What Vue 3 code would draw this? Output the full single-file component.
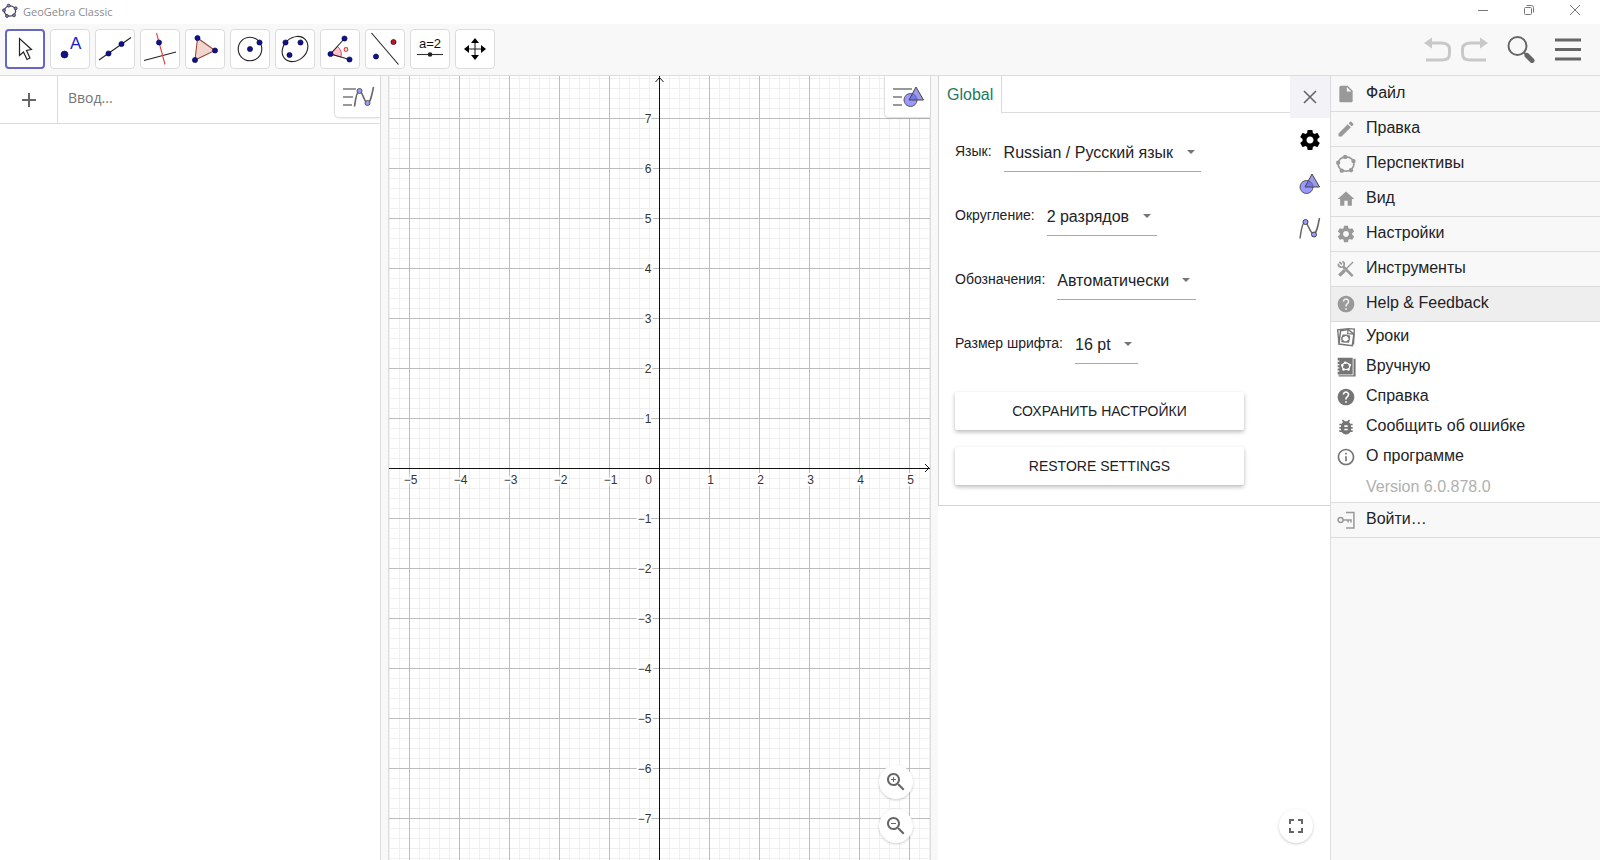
<template>
  <div class="app">
    <div class="titlebar">
      <svg class="logo" viewBox="0 0 24 24" v-html="icons.logo"></svg>
      <span class="app-name">GeoGebra Classic</span>
      <div class="window-buttons">
        <button aria-label="Minimize">
          <svg width="12" height="12" viewBox="0 0 12 12"><path d="M1 6.5H11" stroke="#777" fill="none"/></svg>
        </button>
        <button aria-label="Restore">
          <svg width="12" height="12" viewBox="0 0 12 12"><path d="M1.5 4.5Q1.5 3.5 2.5 3.5H7.5Q8.5 3.5 8.5 4.5V9.5Q8.5 10.5 7.5 10.5H2.5Q1.5 10.5 1.5 9.5ZM3.5 1.5H8.5Q10.5 1.5 10.5 3.5V8.5" stroke="#777" fill="none"/></svg>
        </button>
        <button aria-label="Close">
          <svg width="12" height="12" viewBox="0 0 12 12"><path d="M1 1L11 11M11 1L1 11" stroke="#777" fill="none"/></svg>
        </button>
      </div>
    </div>

    <header class="toolbar">
      <div class="tools">
        <button
          v-for="tool in tools"
          :key="tool.name"
          class="tool"
          :class="{ active: tool.name === activeTool }"
          :aria-label="tool.name"
          @click="activeTool = tool.name"
        >
          <svg viewBox="2 2 36 36" v-html="tool.icon"></svg>
        </button>
      </div>
      <div class="actions">
        <div class="history">
          <button aria-label="Undo">
            <svg width="28" height="26" viewBox="0 0 28 26">
              <path d="M7 7H17Q25.5 7 25.5 13V18Q25.5 24 18 24H2" fill="none" stroke="#c8c8c8" stroke-width="3"/>
              <path d="M0 7L8 1.500V12.500Z" fill="#c8c8c8"/>
            </svg>
          </button>
          <button aria-label="Redo">
            <svg width="28" height="26" viewBox="0 0 28 26">
              <path d="M21 7H11Q2.5 7 2.5 13V18Q2.5 24 10 24H26" fill="none" stroke="#c8c8c8" stroke-width="3"/>
              <path d="M28 7L20 1.500V12.500Z" fill="#c8c8c8"/>
            </svg>
          </button>
        </div>
        <button aria-label="Search">
          <svg width="28" height="28" viewBox="0 0 28 28">
            <circle cx="10.5" cy="11" r="9" fill="none" stroke="#666" stroke-width="2"/>
            <path d="M17 17.5L20 20.5" stroke="#666" stroke-width="2"/>
            <path d="M20 20.5L25 25.5" stroke="#666" stroke-width="5" stroke-linecap="round"/>
          </svg>
        </button>
        <button aria-label="Menu">
          <svg width="28" height="28" viewBox="0 0 28 28">
            <path d="M1 5H27M1 14.500H27M1 24H27" stroke="#666" stroke-width="3"/>
          </svg>
        </button>
      </div>
    </header>

    <main class="main">
      <div class="workspace">
        <section class="algebra">
          <div class="algebra-row">
            <button class="add" aria-label="Add">
              <svg width="16" height="16" viewBox="0 0 16 16"><path d="M8 1V15M1 8H15" stroke="#666" stroke-width="2"/></svg>
            </button>
            <input v-model="expression" class="expression" type="text" placeholder="Ввод..." aria-label="Ввод">
            <button class="stylebar" aria-label="Algebra style bar">
              <svg width="32" height="24" viewBox="0 0 32 24">
                <path d="M0 4H13M0 12H10M0 20H9" stroke="#999" stroke-width="2"/>
                <path d="M11.5 21.5C12.5 14 14 5.500 16.5 5.500S21.5 18 24.5 18S29 9 30.5 2" fill="none" stroke="#666" stroke-width="1.600"/>
                <circle cx="16.500" cy="6" r="2.500" fill="#9999ff" stroke="#555"/>
                <circle cx="24.500" cy="18" r="2.500" fill="#9999ff" stroke="#555"/>
              </svg>
            </button>
          </div>
        </section>

        <section class="graphics">
          <svg class="canvas">
            <!-- everything is measured from the origin in the centre -->
            <svg x="50%" y="50%" overflow="visible" shape-rendering="crispEdges">
              <g stroke="#f0f0f0">
                <path v-for="n in minor" :key="n" :d="`M${n * 10} -3000V3000M-3000 ${n * 10}H3000`"/>
              </g>
              <g stroke="#bdbdbd">
                <path v-for="n in major" :key="n" :d="`M${n * unit} -3000V3000M-3000 ${n * unit}H3000`"/>
              </g>
              <path d="M0 -3000V3000M-3000 0H3000" stroke="#111"/>
            </svg>
            <svg x="50%" y="50%" overflow="visible">
              <g class="labels">
                <text x="-11" y="16" text-anchor="middle">0</text>
                <text v-for="n in xLabels" :key="'x' + n" :x="n * unit + 1" y="16" text-anchor="middle">{{ format(n) }}</text>
                <text v-for="n in yLabels" :key="'y' + n" x="-8" :y="-n * unit + 5" text-anchor="end">{{ format(n) }}</text>
              </g>
            </svg>
            <svg x="50%" y="0" overflow="visible"><path d="M-4 6L0 1.500L4 6" fill="none" stroke="#111"/></svg>
            <svg x="100%" y="50%" overflow="visible"><path d="M-5 -4L-1 0L-5 4" fill="none" stroke="#111"/></svg>
          </svg>
          <button class="stylebar over" aria-label="Graphics style bar">
            <svg width="32" height="24" viewBox="0 0 32 24">
              <path d="M0 4H19M0 12H9M0 20H9" stroke="#999" stroke-width="2"/>
              <g transform="translate(10 1)" v-html="icons.shapes"></g>
            </svg>
          </button>
          <div class="zoom-buttons">
            <button class="round" aria-label="Zoom in"><svg viewBox="0 0 24 24" v-html="icons.zoomIn"></svg></button>
            <button class="round" aria-label="Zoom out"><svg viewBox="0 0 24 24" v-html="icons.zoomOut"></svg></button>
          </div>
        </section>

        <section class="settings">
          <div class="settings-body">
            <div class="settings-main">
              <div class="tabs">
                <button class="tab">Global</button>
                <span class="tab-rest"></span>
              </div>
              <form class="form" @submit.prevent>
                <div v-for="field in fields" :key="field.id" class="field">
                  <label :for="field.id">{{ field.label }}</label>
                  <span class="select">
                    <select :id="field.id"><option>{{ field.value }}</option></select>
                  </span>
                </div>
                <div class="form-buttons">
                  <button type="button">СОХРАНИТЬ НАСТРОЙКИ</button>
                  <button type="button">RESTORE SETTINGS</button>
                </div>
              </form>
            </div>
            <div class="side">
              <button class="close" aria-label="Close settings">
                <svg width="16" height="16" viewBox="0 0 16 16"><path d="M2 2L14 14M14 2L2 14" stroke="#666" stroke-width="1.600"/></svg>
              </button>
              <button aria-label="Global settings"><svg width="24" height="24" viewBox="0 0 24 24" v-html="icons.gear"></svg></button>
              <button aria-label="Graphics settings"><svg width="22" height="22" viewBox="0 0 22 22" v-html="icons.shapes"></svg></button>
              <button aria-label="Algebra settings">
                <svg width="22" height="22" viewBox="0 0 22 22">
                  <path d="M1 21.500C2 14 3.500 5 6 5S11.500 17 14.500 17S19 9 20.500 1" fill="none" stroke="#666" stroke-width="1.500"/>
                  <circle cx="6.500" cy="5" r="2.500" fill="#9999ff" stroke="#444"/>
                  <circle cx="15" cy="17.500" r="2.500" fill="#9999ff" stroke="#444"/>
                </svg>
              </button>
            </div>
          </div>
          <button class="round fullscreen" aria-label="Fullscreen"><svg viewBox="0 0 24 24" v-html="icons.fullscreen"></svg></button>
        </section>
      </div>

      <nav class="menu">
        <button v-for="item in menuItems" :key="item.label" class="menu-item" :class="{ open: item.open }">
          <svg viewBox="0 0 24 24" v-html="icons[item.icon]"></svg>
          <span>{{ item.label }}</span>
        </button>
        <div class="submenu">
          <button v-for="item in helpItems" :key="item.label" class="sub-item">
            <svg viewBox="0 0 24 24" v-html="icons[item.icon]"></svg>
            <span>{{ item.label }}</span>
          </button>
          <div class="version">Version 6.0.878.0</div>
        </div>
        <button class="menu-item">
          <svg viewBox="0 0 24 24" v-html="icons.signIn"></svg>
          <span>Войти…</span>
        </button>
      </nav>
    </main>
  </div>
</template>

<script setup>
import { ref } from "vue"

const activeTool = ref("Move")
const expression = ref("")

const dot = (x, y, r = 2.6, fill = "#11118c") => `<circle cx="${x}" cy="${y}" r="${r}" fill="${fill}" stroke="#000040" stroke-width=".6"/>`
const stroke = (d, color = "#222") => `<path d="${d}" fill="none" stroke="${color}" stroke-width="1.1"/>`

const tools = [
  { name: "Move", icon: `<path d="M14.5 9.5V26.5L18.5 23L22 30.5L25 29L21.5 21.5L26.5 20.5Z" fill="#fff" stroke="#222" stroke-width="1.2"/>` },
  { name: "Point", icon: dot(14.5, 25.5, 3.5) + `<text x="20" y="20" font-family="Liberation Sans, sans-serif" font-size="17" fill="#1a1acc">A</text>` },
  { name: "Line", icon: stroke("M4 31L36 8.5") + dot(13.5, 24.5) + dot(26.5, 15) },
  { name: "Perpendicular", icon: stroke("M4 31.5L36 23") + stroke("M16.5 4L25 35.5", "#e04040") + dot(19, 13.5) },
  { name: "Polygon", icon: `<path d="M12.5 9L30 21.5L10 31Z" fill="#f0d6cc" stroke="#a0483a" stroke-width="1.1"/>` + dot(12.5, 9) + dot(30, 21.5) + dot(10, 31) },
  { name: "Circle", icon: `<circle cx="20" cy="20" r="11.8" fill="none" stroke="#222" stroke-width="1.1"/>` + dot(20, 20) + dot(29.5, 13.5) },
  { name: "Ellipse", icon: `<ellipse cx="20" cy="20" rx="14" ry="11.3" transform="rotate(-42 20 20)" fill="none" stroke="#222" stroke-width="1.1"/>` + dot(10.5, 13.5) + dot(25.5, 13.5) + dot(14.5, 26) },
  { name: "Angle", icon: `<path d="M10.5 25L17.500 17.5Q22.5 21.5 21 28Z" fill="#ffc4cc" stroke="#e05060"/>` + stroke("M24.5 9.5L10.5 25L29.5 30.5") + `<circle cx="26" cy="20.5" r="1.8" fill="none" stroke="#e04040" stroke-width="1.2"/>` + dot(24.5, 9.5) + dot(10.5, 25) + dot(29.5, 30.5) },
  { name: "Reflect", icon: stroke("M6.5 4L33.5 35.5") + dot(11, 27.5) + dot(28.5, 13, 2.6, "#c01818") },
  { name: "Slider", icon: `<text x="20" y="19" text-anchor="middle" font-family="Liberation Sans, sans-serif" font-size="13" fill="#111">a=2</text>` + stroke("M7 25.5H33", "#333") + `<circle cx="20" cy="25.5" r="2.3" fill="#222"/>` },
  { name: "Move view", icon: stroke("M20 12V28M12 20H28") + `<path d="M20 9L24 14H16ZM20 31L24 26H16ZM9 20L14 16V24ZM31 20L26 16V24Z" fill="#000"/>` }
]

// ellipse with five points on it
const pentagon = `<g fill="currentColor"><ellipse cx="12" cy="12" rx="9.500" ry="8.500" fill="none" stroke="currentColor" stroke-width="2"/>
  <circle cx="11" cy="3.500" r="2.600"/><circle cx="21" cy="8.500" r="2.600"/><circle cx="18" cy="19.500" r="2.600"/><circle cx="7" cy="20" r="2.600"/><circle cx="2.600" cy="10.500" r="2.600"/></g>`

const lens = "M15.5 14h-.79l-.28-.27C15.41 12.59 16 11.11 16 9.5 16 5.91 13.09 3 9.5 3S3 5.91 3 9.5 5.91 16 9.5 16c1.61 0 3.09-.59 4.23-1.57l.27.28v.79l5 4.99L20.49 19l-4.99-5zm-6 0C7.01 14 5 11.99 5 9.5S7.01 5 9.5 5 14 7.01 14 9.5 11.99 14 9.5 14z"

const icons = {
  logo: `<ellipse cx="12" cy="12" rx="8.500" ry="7.800" fill="none" stroke="#444" stroke-width="1.800"/>
    <g fill="#8080e0" stroke="#333" stroke-width="1.200"><circle cx="10" cy="4" r="2.200"/><circle cx="20.500" cy="8" r="2.200"/><circle cx="18" cy="18.500" r="2.200"/><circle cx="7.500" cy="19.500" r="2.200"/><circle cx="3" cy="11" r="2.200"/></g>`,
  shapes: `<circle cx="7.500" cy="14" r="6.500" fill="#9999ff" stroke="#555"/>
    <path d="M13 1L20.500 14H6Z" fill="#6666dd" fill-opacity=".65" stroke="#444"/>`,
  file: `<path fill="currentColor" d="M6 2c-1.1 0-1.99.9-1.99 2L4 20c0 1.1.89 2 1.99 2H18c1.1 0 2-.9 2-2V8l-6-6H6zm7 7V3.500L18.500 9H13z"/>`,
  edit: `<path fill="currentColor" d="M3 17.25V21h3.75L17.81 9.94l-3.75-3.75L3 17.25zM20.71 7.04c.39-.39.39-1.02 0-1.41l-2.34-2.34c-.39-.39-1.02-.39-1.41 0l-1.83 1.83 3.75 3.75 1.83-1.83z"/>`,
  perspectives: pentagon,
  home: `<path fill="currentColor" d="M10 20v-6h4v6h5v-8h3L12 3 2 12h3v8z"/>`,
  gear: `<path fill="currentColor" d="M19.43 12.98c.04-.32.07-.64.07-.98s-.03-.66-.07-.98l2.11-1.65c.19-.15.24-.42.12-.64l-2-3.46c-.12-.22-.39-.3-.61-.22l-2.49 1c-.52-.4-1.08-.73-1.69-.98l-.38-2.65C14.46 2.18 14.25 2 14 2h-4c-.25 0-.46.18-.49.42l-.38 2.65c-.61.25-1.17.59-1.69.98l-2.49-1c-.23-.09-.49 0-.61.22l-2 3.46c-.13.22-.07.49.12.64l2.11 1.65c-.04.32-.07.65-.07.98s.03.66.07.98l-2.11 1.65c-.19.15-.24.42-.12.64l2 3.46c.12.22.39.3.61.22l2.49-1c.52.4 1.08.73 1.69.98l.38 2.65c.03.24.24.42.49.42h4c.25 0 .46-.18.49-.42l.38-2.65c.61-.25 1.17-.59 1.69-.98l2.49 1c.23.09.49 0 .61-.22l2-3.46c.12-.22.07-.49-.12-.64l-2.11-1.65zM12 15.5c-1.93 0-3.5-1.57-3.5-3.5s1.57-3.5 3.5-3.5 3.5 1.57 3.5 3.5-1.57 3.5-3.5 3.5z"/>`,
  tools: `<g fill="none" stroke="currentColor"><path d="M8.500 9L20 20.500" stroke-width="3"/><path d="M4 3.500L7 6.500M3 5.500A3.500 3.500 0 1 0 7.500 3" stroke-width="2"/><path d="M20.500 3.500L11 13" stroke-width="1.600"/><path d="M10.500 13.500L4 20" stroke-width="4"/></g>`,
  help: `<path fill="currentColor" d="M12 2C6.48 2 2 6.48 2 12s4.48 10 10 10 10-4.48 10-10S17.52 2 12 2zm1 17h-2v-2h2v2zm2.07-7.75l-.9.92C13.45 12.9 13 13.5 13 15h-2v-.5c0-1.1.45-2.1 1.17-2.83l1.24-1.26c.37-.36.59-.86.59-1.41 0-1.1-.9-2-2-2s-2 .9-2 2H8c0-2.21 1.79-4 4-4s4 1.79 4 4c0 .88-.36 1.68-.93 2.25z"/>`,
  lessons: `<g fill="none" stroke="currentColor"><path d="M15 2L2 3.500L3.500 19M15 2L22 2.500L21 21" stroke-width="1.600"/><path d="M5.500 4.500L14.500 3L21.500 8.500L19.500 22.500L3.500 20.500Z" stroke-width="1.800"/><path d="M14.500 3L14 8L21.500 8.500" stroke-width="1.500"/><ellipse cx="11.500" cy="14" rx="4.500" ry="4" stroke-width="1.800"/></g><g fill="currentColor"><circle cx="9" cy="10.500" r="1.500"/><circle cx="15.500" cy="11.500" r="1.500"/><circle cx="14.500" cy="17.500" r="1.500"/><circle cx="8" cy="17" r="1.500"/></g>`,
  manual: `<path fill="currentColor" d="M2 1H20V21H2ZM21 2H23.500V23.500H3V22H21Z"/><path d="M.5 5H4M.5 9H4M.5 13H4M.5 17H4" stroke="#fff" stroke-width="1.500"/><g fill="#fff"><ellipse cx="12" cy="11" rx="4.500" ry="4" fill="none" stroke="#fff" stroke-width="1.500"/><circle cx="11" cy="7" r="1.500"/><circle cx="16.500" cy="9.500" r="1.500"/><circle cx="15" cy="15" r="1.500"/><circle cx="9" cy="15" r="1.500"/><circle cx="7.500" cy="10" r="1.500"/></g>`,
  bug: `<path fill="currentColor" d="M20 8h-2.81c-.45-.78-1.07-1.45-1.82-1.96L17 4.41 15.59 3l-2.17 2.17C12.96 5.06 12.49 5 12 5c-.49 0-.96.06-1.41.17L8.41 3 7 4.41l1.62 1.63C7.88 6.55 7.26 7.22 6.81 8H4v2h2.09c-.05.33-.09.66-.09 1v1H4v2h2v1c0 .34.04.67.09 1H4v2h2.81c1.04 1.79 2.97 3 5.19 3s4.15-1.21 5.19-3H20v-2h-2.09c.05-.33.09-.66.09-1v-1h2v-2h-2v-1c0-.34-.04-.67-.09-1H20V8zm-6 8h-4v-2h4v2zm0-4h-4v-2h4v2z"/>`,
  info: `<path fill="currentColor" d="M11 7h2v2h-2zm0 4h2v6h-2zm1-9C6.48 2 2 6.48 2 12s4.48 10 10 10 10-4.48 10-10S17.52 2 12 2zm0 18c-4.41 0-8-3.59-8-8s3.59-8 8-8 8 3.59 8 8-3.59 8-8 8z"/>`,
  signIn: `<g fill="none" stroke="currentColor" stroke-width="1.800"><path d="M12 3H21.500V21.500H12"/><circle cx="5.500" cy="12" r="3"/><path d="M8.500 12H18V15M14.500 12V15"/></g>`,
  zoomIn: `<path fill="#666" d="${lens}M12 10h-2v2H9v-2H7V9h2V7h1v2h2v1z"/>`,
  zoomOut: `<path fill="#666" d="${lens}M7 9h5v1H7z"/>`,
  fullscreen: `<path fill="#666" d="M7 14H5v5h5v-2H7v-3zm-2-4h2V7h3V5H5v5zm12 7h-3v2h5v-5h-2v3zM14 5v2h3v3h2V5h-5z"/>`
}

const range = (max) => Array.from({ length: max * 2 + 1 }, (_, i) => i - max)
const unit = 50
const minor = range(200)
const major = range(40)
const xLabels = range(5).filter(n => n !== 0)
const yLabels = range(7).filter(n => n !== 0)
const format = (n) => n < 0 ? "−" + -n : String(n)

const fields = [
  { id: "language", label: "Язык:", value: "Russian / Русский язык" },
  { id: "rounding", label: "Округление:", value: "2 разрядов" },
  { id: "labeling", label: "Обозначения:", value: "Автоматически" },
  { id: "font-size", label: "Размер шрифта:", value: "16 pt" }
]

const menuItems = [
  { label: "Файл", icon: "file" },
  { label: "Правка", icon: "edit" },
  { label: "Перспективы", icon: "perspectives" },
  { label: "Вид", icon: "home" },
  { label: "Настройки", icon: "gear" },
  { label: "Инструменты", icon: "tools" },
  { label: "Help & Feedback", icon: "help", open: true }
]

const helpItems = [
  { label: "Уроки", icon: "lessons" },
  { label: "Вручную", icon: "manual" },
  { label: "Справка", icon: "help" },
  { label: "Сообщить об ошибке", icon: "bug" },
  { label: "О программе", icon: "info" }
]
</script>

<style>
body{
  margin: 0;
}
</style>

<style scoped>
.app{
  display: flex;
  flex-direction: column;
  height: 100vh;
  background: #fff;
  color: #222226;
  font-family: "Liberation Sans", Arial, sans-serif;
  font-size: 16px;
  overflow: hidden;
}
button{
  display: flex;
  align-items: center;
  justify-content: center;
  padding: 0;
  border: 0;
  background: none;
  color: inherit;
  font: inherit;
  cursor: pointer;
}
svg{
  display: block;
  flex-shrink: 0;
}

/* title bar */
.titlebar{
  display: flex;
  align-items: center;
  box-sizing: border-box;
  height: 24px;
  padding: 0 19px 2px 2px;
}
.logo{
  width: 16px;
  height: 16px;
}
.app-name{
  margin-left: 5px;
  color: #8c8c8c;
  font-family: "Open Sans", sans-serif;
  font-size: 11px;
}
.window-buttons{
  display: flex;
  gap: 34px;
  margin-left: auto;
  padding-bottom: 2px;
}

/* toolbar */
.toolbar{
  display: flex;
  align-items: center;
  justify-content: space-between;
  box-sizing: border-box;
  height: 52px;
  padding: 0 18px 2px 5px;
  background: #f8f8f8;
  border-bottom: 1px solid #dcdcdc;
}
.tools{
  display: flex;
  gap: 5px;
}
.tool{
  box-sizing: border-box;
  width: 40px;
  height: 40px;
  border: 1px solid #dcdcdc;
  border-radius: 4px;
  background: #fff;
}
.tool svg{
  width: 36px;
  height: 36px;
}
.tool.active{
  border: 2px solid #6666c4;
}
.actions{
  display: flex;
  align-items: center;
  gap: 19px;
}
.history{
  display: flex;
  gap: 8px;
}

/* views */
.main{
  display: flex;
  flex: 1;
  min-height: 0;
}
.workspace{
  display: grid;
  flex: 1;
  grid-template-columns: 381fr 543fr 392fr;
  gap: 7px;
  min-width: 0;
  background: #f8f8f8;
}
.algebra{
  min-width: 0;
  background: #fff;
  border-right: 1px solid #dcdcdc;
}
.algebra-row{
  display: flex;
  align-items: stretch;
  height: 47px;
  border-bottom: 1px solid #dcdcdc;
}
.add{
  box-sizing: border-box;
  width: 58px;
  border-right: 1px solid #dcdcdc;
}
.expression{
  flex: 1;
  min-width: 0;
  padding: 0 10px 4px;
  border: 0;
  outline: 0;
  background: none;
  color: #333;
  font-family: "Open Sans", sans-serif;
  font-size: 14px;
}
.expression::placeholder{
  color: #757575;
}
.stylebar{
  box-sizing: border-box;
  align-self: flex-start;
  width: 46px;
  height: 42px;
  padding-left: 2px;
  background: #fff;
  border: 1px solid #e0e0e0;
  border-width: 0 0 1px 1px;
  border-radius: 0 0 0 5px;
  box-shadow: 0 1px 2px rgba(0, 0, 0, .08);
}
.stylebar.over{
  position: absolute;
  top: 0;
  right: 0;
}
.graphics{
  position: relative;
  min-width: 0;
  background: #fff;
  border-left: 1px solid #dcdcdc;
  border-right: 1px solid #dcdcdc;
}
.canvas{
  width: 100%;
  height: 100%;
}
.labels{
  fill: #333;
  stroke: #fff;
  stroke-width: 4px;
  paint-order: stroke;
  font-size: 12px;
}
.zoom-buttons{
  position: absolute;
  right: 17px;
  bottom: 17px;
  display: flex;
  flex-direction: column;
  gap: 10px;
}
.round{
  width: 34px;
  height: 34px;
  border-radius: 50%;
  background: #fff;
  box-shadow: 0 1px 3px rgba(0, 0, 0, .2);
}
.round svg{
  width: 24px;
  height: 24px;
}

/* settings */
.settings{
  position: relative;
  min-width: 0;
  background: #fff;
}
.settings-body{
  display: flex;
  border-left: 1px solid #d4d4d4;
  border-bottom: 1px solid #d4d4d4;
}
.settings-main{
  flex: 1;
  min-width: 0;
}
.tabs{
  display: flex;
  height: 37px;
}
.tab{
  padding: 0 8px;
  border-right: 1px solid #d4dcd8;
  color: #217a5f;
}
.tab-rest{
  flex: 1;
  border-bottom: 1px solid #dcdcdc;
}
.form{
  padding: 19px 16px 20px;
}
.field{
  display: flex;
  align-items: center;
  gap: 12px;
  margin-bottom: 24px;
}
.field label{
  padding-bottom: 2px;
  font-size: 14px;
}
.select{
  position: relative;
}
.select::after{
  content: "";
  position: absolute;
  top: 18px;
  right: 6px;
  border: 4px solid transparent;
  border-top-color: #757575;
  border-bottom: 0;
  pointer-events: none;
}
.select select{
  display: block;
  appearance: none;
  height: 40px;
  padding: 2px 27px 0 0;
  border: 0;
  border-bottom: 1px solid #a8a8a8;
  border-radius: 0;
  outline: 0;
  background: none;
  color: inherit;
  font: inherit;
}
.form-buttons{
  display: flex;
  flex-direction: column;
  gap: 17px;
  width: 289px;
  max-width: 100%;
  padding-top: 4px;
}
.form-buttons button{
  height: 38px;
  border-radius: 2px;
  font-size: 14px;
  box-shadow: 0 2px 4px rgba(0, 0, 0, .28);
}
.side{
  display: flex;
  flex-direction: column;
  width: 40px;
}
.side button{
  height: 44px;
  color: #000;
}
.side .close{
  height: 42px;
  background: #f3f3f7;
}
.fullscreen{
  position: absolute;
  right: 17px;
  bottom: 17px;
}

/* menu */
.menu{
  box-sizing: border-box;
  width: 270px;
  padding-top: 1px;
  background: #f8f8f8;
  border-left: 1px solid #dcdcdc;
}
.menu-item, .sub-item{
  box-sizing: border-box;
  justify-content: flex-start;
  gap: 10px;
  width: 100%;
  height: 30px;
  padding-left: 5px;
}
.menu-item{
  height: 35px;
  border-bottom: 1px solid #dcdcdc;
}
.menu-item svg, .sub-item svg{
  width: 20px;
  height: 20px;
  color: #999;
}
.sub-item svg{
  color: #757575;
}
.menu-item span, .sub-item span{
  padding-bottom: 2px;
}
.menu-item.open{
  background: #eee;
}
.submenu{
  background: #fff;
  border-bottom: 1px solid #dcdcdc;
}
.version{
  height: 30px;
  padding-left: 35px;
  color: #b0b0b0;
  line-height: 30px;
}
</style>
